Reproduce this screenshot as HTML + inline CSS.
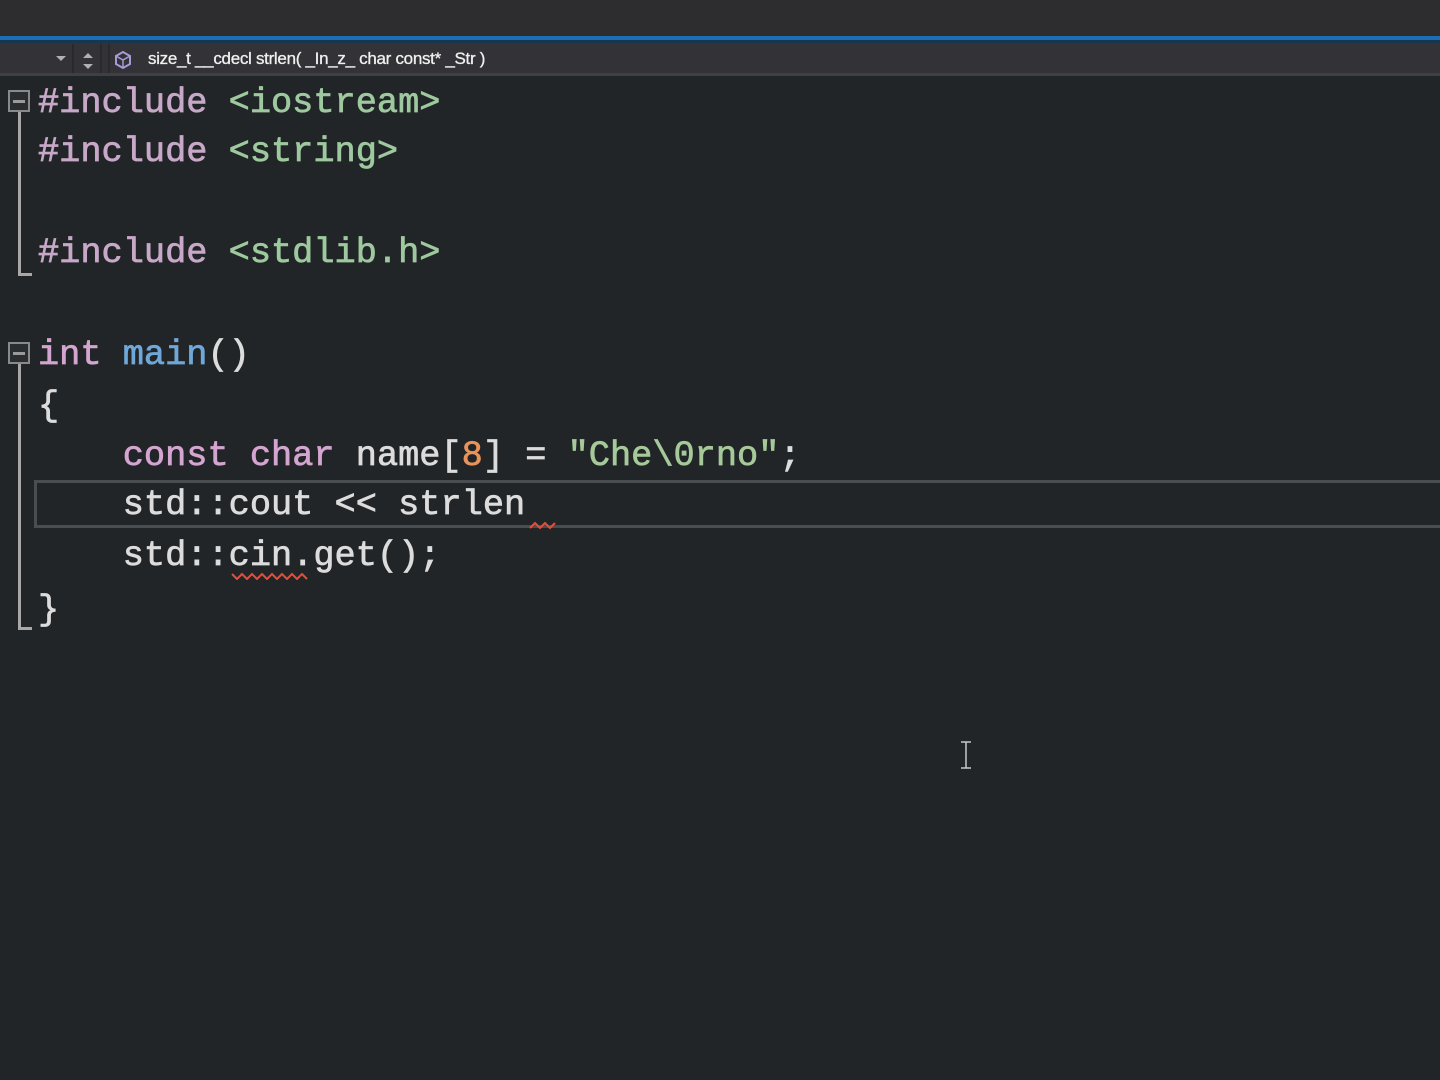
<!DOCTYPE html>
<html><head><meta charset="utf-8"><style>
html,body{margin:0;padding:0;width:1440px;height:1080px;overflow:hidden;background:#222527;}
.top{position:absolute;left:0;top:0;width:1440px;height:36px;background:#2d2d30;}
.blue{position:absolute;left:0;top:36px;width:1440px;height:4px;background:#1c6fb5;}
.blue2{position:absolute;left:0;top:40px;width:1440px;height:3px;background:#17374e;}
.nav{position:absolute;left:0;top:43px;width:1440px;height:30px;background:#333337;}
.navb{position:absolute;left:0;top:73px;width:1440px;height:3px;background:#3f3f44;}
.sep{position:absolute;top:44px;width:2px;height:29px;background:#2a2a2d;}
.navtxt{position:absolute;left:148px;top:49px;font:17px "Liberation Sans",sans-serif;color:#f0f0f0;letter-spacing:-0.3px;-webkit-text-stroke:0.3px #f0f0f0;}
.code{position:absolute;left:38px;font:35.3px "Liberation Mono",monospace;color:#dcdcdc;white-space:pre;line-height:50px;-webkit-text-stroke:0.7px currentColor;}
.pp{color:#c8a8c8}.inc{color:#9ec99e}.kw{color:#d3a5d0}.fn{color:#6fa7d8}.num{color:#e8935a}.str{color:#a6c99a}
.box{position:absolute;left:8px;width:22px;height:22px;border:2px solid #8a8a8a;box-sizing:border-box;background:#2b2e30;}
.box:after{content:"";position:absolute;left:3px;right:3px;top:8px;height:3px;background:#9a9a9a;}
.vl{position:absolute;left:18px;width:3px;background:#a8a8a8;}
.hl{position:absolute;left:18px;height:3px;width:14px;background:#a8a8a8;}
.cur{position:absolute;left:34px;top:480px;width:1420px;height:48px;border:3px solid #4a4d4f;box-sizing:border-box;}
</style></head><body>
<div class="top"></div><div class="blue"></div><div class="blue2"></div>
<div class="nav"></div><div class="navb"></div>
<div class="sep" style="left:72px"></div><div class="sep" style="left:100px"></div><div class="sep" style="left:108px"></div>
<svg style="position:absolute;left:52px;top:52px" width="50" height="22"><path d="M4 4h10l-5 5z" fill="#b0b0b0"/><path d="M31 6l5-5 5 5z" fill="#b0b0b0"/><path d="M31 12h10l-5 5z" fill="#b0b0b0"/></svg>
<svg style="position:absolute;left:113px;top:50px" width="20" height="20"><path d="M10 2l7 4v8l-7 4-7-4V6z" fill="none" stroke="#a89ad8" stroke-width="2"/><path d="M3 6l7 4 7-4M10 10v8" fill="none" stroke="#a89ad8" stroke-width="1.5"/></svg>
<div class="navtxt">size_t __cdecl strlen( _In_z_ char const* _Str )</div>

<div class="cur"></div>

<div class="box" style="top:90px"></div>
<div class="vl" style="top:112px;height:164px"></div><div class="hl" style="top:273px"></div>
<div class="box" style="top:342px"></div>
<div class="vl" style="top:364px;height:266px"></div><div class="hl" style="top:627px"></div>

<div class="code" style="top:78px"><span class="pp">#include</span> <span class="inc">&lt;iostream&gt;</span></div>
<div class="code" style="top:127px"><span class="pp">#include</span> <span class="inc">&lt;string&gt;</span></div>
<div class="code" style="top:228px"><span class="pp">#include</span> <span class="inc">&lt;stdlib.h&gt;</span></div>
<div class="code" style="top:330px"><span class="kw">int</span> <span class="fn">main</span>()</div>
<div class="code" style="top:381px">{</div>
<div class="code" style="top:431px">    <span class="kw">const</span> <span class="kw">char</span> name[<span class="num">8</span>] = <span class="str">"Che\0rno"</span>;</div>
<div class="code" style="top:480px">    std::cout &lt;&lt; strlen</div>
<div class="code" style="top:531px">    std::cin.get();</div>
<div class="code" style="top:585px">}</div>

<svg style="position:absolute;left:528px;top:520px" width="32" height="10"><path d="M2 8l5-5 5 5 5-5 5 5 5-5" fill="none" stroke="#e0503c" stroke-width="2"/></svg>
<svg style="position:absolute;left:230px;top:570px" width="86" height="10"><path d="M2 4l5 5 5-5 5 5 5-5 5 5 5-5 5 5 5-5 5 5 5-5 5 5 5-5 5 5 5-5 5 5" fill="none" stroke="#e0503c" stroke-width="2"/></svg>
<svg style="position:absolute;left:958px;top:740px" width="16" height="30"><path d="M3 2h10M8 2v26M3 28h10" fill="none" stroke="#c8c8c8" stroke-width="1.5"/></svg>
</body></html>
